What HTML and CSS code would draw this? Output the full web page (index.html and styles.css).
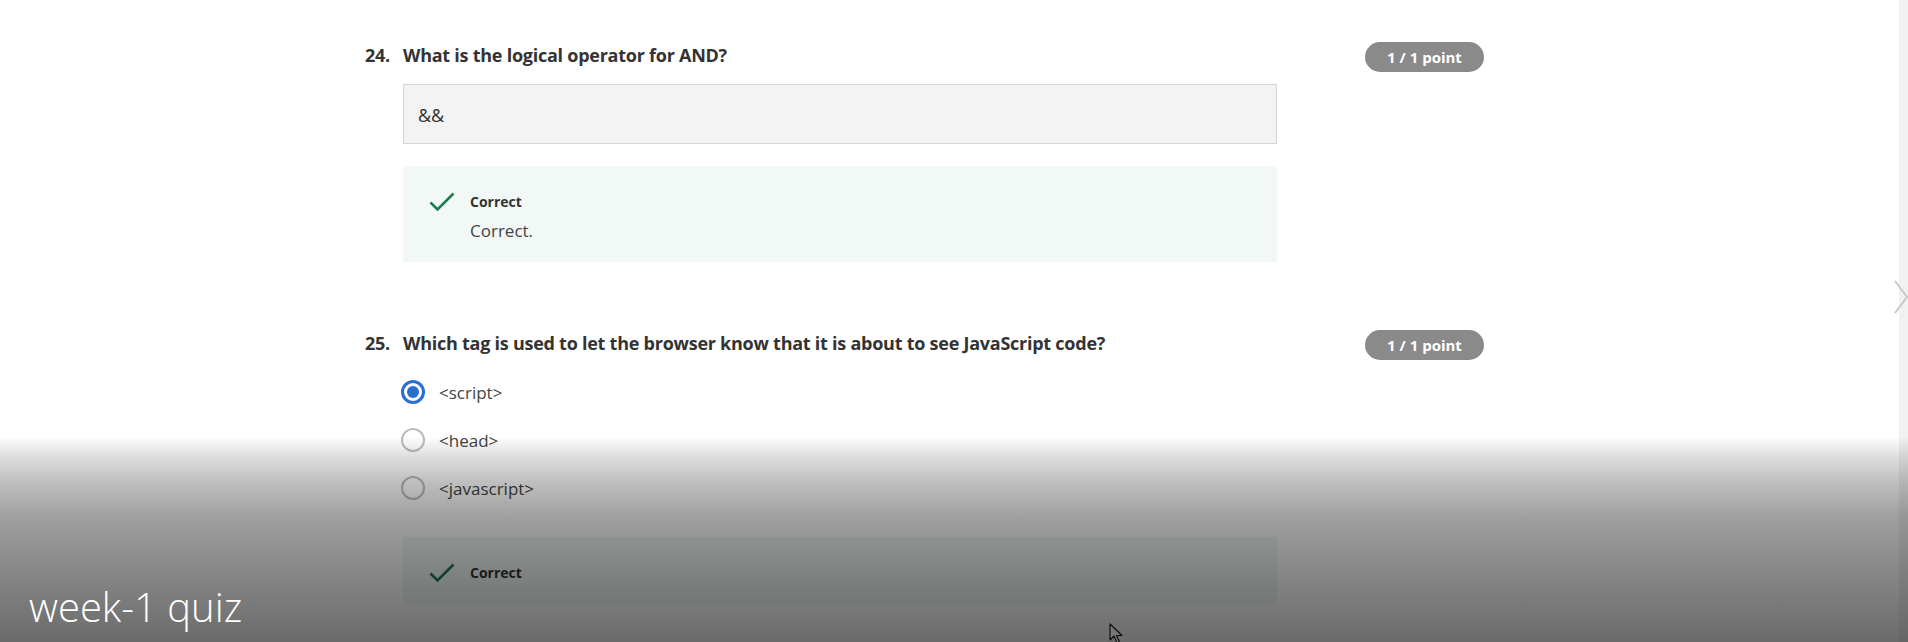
FILE: index.html
```html
<!DOCTYPE html>
<html lang="en">
<head>
<meta charset="utf-8">
<title>week-1 quiz</title>
<link rel="stylesheet" href="styles.css">
</head>
<body>
<main class="quiz">
  <section class="question">
    <div class="q-head">
      <span class="q-num">24.</span>
      <h3 class="q-title">What is the logical operator for AND?</h3>
      <span class="badge">1 / 1 point</span>
    </div>
    <div class="q-body">
      <div class="answer-input">&amp;&amp;</div>
      <div class="feedback">
        <svg class="check" viewBox="0 0 26 20" width="26" height="20"><path d="M1.5 10.5 L8.5 17.5 L24.5 1.5" fill="none" stroke="#1d7c50" stroke-width="2.6"/></svg>
        <div class="fb-content">
          <div class="fb-label">Correct</div>
          <div class="fb-text">Correct.</div>
        </div>
      </div>
    </div>
  </section>

  <section class="question q25">
    <div class="q-head">
      <span class="q-num">25.</span>
      <h3 class="q-title">Which tag is used to let the browser know that it is about to see JavaScript code?</h3>
      <span class="badge">1 / 1 point</span>
    </div>
    <div class="q-body">
      <div class="options">
        <div class="option"><span class="radio selected"></span><span class="opt-text">&lt;script&gt;</span></div>
        <div class="option"><span class="radio"></span><span class="opt-text">&lt;head&gt;</span></div>
        <div class="option"><span class="radio"></span><span class="opt-text">&lt;javascript&gt;</span></div>
      </div>
      <div class="feedback short">
        <svg class="check" viewBox="0 0 26 20" width="26" height="20"><path d="M1.5 10.5 L8.5 17.5 L24.5 1.5" fill="none" stroke="#1d7c50" stroke-width="2.6"/></svg>
        <div class="fb-content">
          <div class="fb-label">Correct</div>
        </div>
      </div>
    </div>
  </section>
</main>

<div class="scroll-strip"></div>
<svg class="next-arrow" viewBox="0 0 16 34" width="16" height="34"><path d="M2 1 L14 17 L2 33" fill="none" stroke="#c8c8c8" stroke-width="2"/></svg>
<div class="shade"></div>
<div class="video-title">week-1 quiz</div>
<svg class="cursor" viewBox="0 0 14 22" width="14" height="22"><path d="M1 1 L1 17 L5 13 L8 20 L10.5 19 L7.5 12.5 L13 12.5 Z" fill="#777" stroke="#111" stroke-width="1.2" stroke-linejoin="round"/></svg>
</body>
</html>
```

FILE: styles.css
```css
html, body {
  margin: 0;
  padding: 0;
  background: #ffffff;
  overflow: hidden;
  height: 642px;
}

body {
  font-family: "Open Sans", "DejaVu Sans", sans-serif;
  color: #333;
  position: relative;
}

.quiz {
  width: 1119px;
  margin-left: 365px;
  padding-top: 41px;
}

.question + .question {
  margin-top: 67px;
}

.q-head {
  display: flex;
  align-items: flex-start;
  height: 30px;
}

.q-num {
  width: 38px;
  flex: none;
  font-size: 18px;
  font-weight: 700;
  line-height: 28px;
  letter-spacing: -0.25px;
  color: #333;
}

.q-title {
  margin: 0;
  font-size: 18px;
  font-weight: 700;
  line-height: 28px;
  letter-spacing: -0.25px;
  color: #333;
}

.badge {
  margin-left: auto;
  margin-top: 1px;
  width: 119px;
  height: 30px;
  border-radius: 15px;
  background: #8a8a8a;
  color: #fff;
  font-size: 15px;
  font-weight: 700;
  line-height: 30px;
  text-align: center;
  flex: none;
}

.q-body {
  margin-left: 38px;
  width: 874px;
}

.answer-input {
  margin-top: 13px;
  height: 58px;
  border: 1px solid #d6d6d6;
  background: #f3f3f3;
  padding-left: 14px;
  font-size: 18px;
  line-height: 60px;
  color: #333;
}

.feedback {
  margin-top: 22px;
  height: 96px;
  background: #f1f8f5;
  display: flex;
  align-items: flex-start;
  padding-left: 26px;
  box-sizing: border-box;
  padding-top: 25px;
}

.feedback.short {
  margin-top: 25px;
  height: 68px;
}

.check {
  flex: none;
  margin-top: 1px;
}

.fb-content {
  margin-left: 15px;
}

.fb-label {
  font-size: 14px;
  font-weight: 700;
  line-height: 22px;
  color: #333;
}

.fb-text {
  margin-top: 3px;
  font-size: 17px;
  line-height: 30px;
  color: #444;
}

.options {
  margin-top: 9px;
  display: flex;
  flex-direction: column;
}

.option {
  display: flex;
  align-items: center;
  height: 48px;
}

.radio {
  width: 24px;
  height: 24px;
  box-sizing: border-box;
  border: 2px solid #bdbdbd;
  border-radius: 50%;
  margin-left: -2px;
  flex: none;
  position: relative;
}

.radio.selected {
  border: 3px solid #2a6fd0;
}

.radio.selected::after {
  content: "";
  position: absolute;
  left: 3px;
  top: 3px;
  width: 12px;
  height: 12px;
  border-radius: 50%;
  background: #2a6fd0;
}

.opt-text {
  margin-left: 14px;
  font-size: 17px;
  color: #444;
}

.scroll-strip {
  position: absolute;
  right: 0;
  top: 0;
  width: 9px;
  height: 642px;
  background: #f1f1f1;
}

.next-arrow {
  position: absolute;
  left: 1893px;
  top: 280px;
}

.shade {
  position: absolute;
  left: 0;
  top: 436px;
  width: 1908px;
  height: 206px;
  background: linear-gradient(to bottom,
    rgba(0,0,0,0) 0%,
    rgba(0,0,0,0.13) 10%,
    rgba(0,0,0,0.25) 22%,
    rgba(0,0,0,0.38) 40%,
    rgba(0,0,0,0.47) 65%,
    rgba(0,0,0,0.58) 100%);
  pointer-events: none;
}

.video-title {
  position: absolute;
  left: 29px;
  top: 579px;
  font-family: "Open Sans", sans-serif;
  font-weight: 300;
  font-size: 40px;
  line-height: 56px;
  color: #ffffff;
}

.cursor {
  position: absolute;
  left: 1109px;
  top: 623px;
}
```
